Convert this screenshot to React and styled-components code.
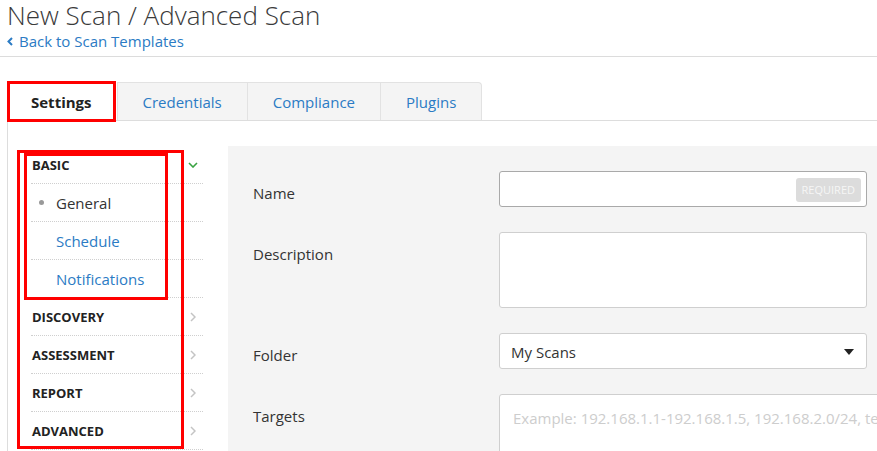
import React from 'react';
import styled, { createGlobalStyle, css } from 'styled-components';

const GlobalStyle = createGlobalStyle`
  html, body {
    margin: 0;
    padding: 0;
    background: #fff;
    overflow: hidden;
  }
  body {
    font-family: "Open Sans", "Noto Sans", sans-serif;
    color: #333;
  }
`;

const BLUE = '#2b7bc4';
const RED = '#ff0000';

const Page = styled.div`
  width: 877px;
  height: 451px;
  overflow: hidden;
`;

const Header = styled.header`
  padding: 0 7px;
  height: 56px;
  border-bottom: 1px solid #dcdcdc;
`;

const Title = styled.h1`
  margin: 0;
  font-size: 26px;
  font-weight: 300;
  line-height: 31px;
  color: #3a3a3a;
  white-space: nowrap;
`;

const BackLink = styled.a`
  display: flex;
  align-items: center;
  gap: 6px;
  font-size: 15px;
  line-height: 20px;
  color: ${BLUE};
  text-decoration: none;
`;

const Main = styled.div`
  margin-top: 25px;
  margin-left: 7px;
`;

const TabBar = styled.div`
  display: flex;
  height: 38px;
  border-bottom: 1px solid #ddd;
  padding-left: 1px;
`;

const Tab = styled.div`
  position: relative;
  display: flex;
  align-items: center;
  justify-content: center;
  padding: 0 25px;
  font-size: 15px;
  color: ${BLUE};
  background: #f4f4f4;
  border: 1px solid #e2e2e2;
  border-bottom: none;
  border-left-width: ${p => (p.$first ? 1 : 0)}px;
  ${p =>
    p.$last &&
    css`
      border-top-right-radius: 4px;
    `}
  ${p =>
    p.$active &&
    css`
      padding: 0 23px;
      background: #fff;
      color: #222;
      font-weight: 700;
      margin-right: 2px;
      margin-bottom: -1px;
      height: 39px;
      border: none;
      outline: 3px solid ${RED};
      outline-offset: -2px;
    `}
`;

const Body = styled.div`
  display: flex;
  align-items: flex-start;
  border-left: 1px solid #ddd;
  padding: 25px 0 0 23px;
  height: 320px;
`;

const Sidebar = styled.nav`
  position: relative;
  width: 172px;
  flex-shrink: 0;
  margin-right: 25px;
`;

const Row = styled.div`
  display: flex;
  align-items: center;
  justify-content: space-between;
  height: 37px;
  border-bottom: 1px dotted #cfcfcf;
  padding-left: ${p => (p.$sub ? 8 : 1)}px;
  padding-right: ${p => (p.$open ? 5 : 7)}px;
`;

const Section = styled.span`
  font-size: 13px;
  font-weight: 700;
  color: #222;
  text-transform: uppercase;
`;

const SubItem = styled.span`
  display: flex;
  align-items: center;
  font-size: 15px;
  color: ${p => (p.$current ? '#333' : BLUE)};
`;

const Bullet = styled.span`
  width: 5px;
  height: 5px;
  border-radius: 50%;
  background: ${p => (p.$show ? '#999' : 'transparent')};
  margin-right: 12px;
`;

const Annotation = styled.div`
  position: absolute;
  border: 3px solid ${RED};
  pointer-events: none;
`;

const Panel = styled.section`
  flex: 1;
  align-self: stretch;
  background: #f4f4f4;
  padding: 25px 0 0 25px;
  overflow: hidden;
`;

const Form = styled.div`
  display: grid;
  grid-template-columns: 246px auto;
  row-gap: 25px;
`;

const Label = styled.label`
  font-size: 15px;
  line-height: 20px;
  color: #333;
  padding-top: 12px;
`;

const Field = styled.div`
  position: relative;
  box-sizing: border-box;
  width: ${p => p.$width || 368}px;
  height: ${p => p.$height || 36}px;
  background: #fff;
  border: 1px solid ${p => (p.$dark ? '#a9a9a9' : '#cfcfcf')};
  border-radius: 3px;
  display: flex;
  align-items: ${p => (p.$top ? 'flex-start' : 'center')};
  justify-content: space-between;
  padding: ${p => (p.$top ? '13px 0 0 13px' : '1px 5px 0 11px')};
  font-size: 15px;
  color: #333;
  white-space: nowrap;
  overflow: hidden;
`;

const Placeholder = styled.span`
  color: #cdcdcd;
  font-size: 15px;
`;

const Badge = styled.span`
  background: #dcdcdc;
  color: #f6f6f6;
  font-size: 11px;
  border-radius: 3px;
  padding: 0 6px;
  height: 24px;
  line-height: 24px;
`;

const Caret = () => (
  <svg width="10" height="6" viewBox="0 0 10 6" style={{ marginRight: 7 }}>
    <path d="M0 0 H10 L5 6 Z" fill="#222" />
  </svg>
);

const Chevron = ({ open }) =>
  open ? (
    <svg width="10" height="6" viewBox="0 0 10 6">
      <path d="M1 1 L5 5 L9 1" fill="none" stroke="#3aa343" strokeWidth="1.6" />
    </svg>
  ) : (
    <svg width="6" height="10" viewBox="0 0 6 10">
      <path d="M1 1 L5 5 L1 9" fill="none" stroke="#c4c4c4" strokeWidth="1.5" />
    </svg>
  );

const BackIcon = () => (
  <svg width="6" height="9" viewBox="0 0 6 9">
    <path d="M5 1 L1.5 4.5 L5 8" fill="none" stroke={BLUE} strokeWidth="2" />
  </svg>
);

const tabs = ['Settings', 'Credentials', 'Compliance', 'Plugins'];
const subItems = ['General', 'Schedule', 'Notifications'];
const sections = ['Discovery', 'Assessment', 'Report', 'Advanced'];

export default function App() {
  return (
    <Page>
      <GlobalStyle />
      <Header>
        <Title>New Scan / Advanced Scan</Title>
        <BackLink href="#">
          <BackIcon />
          Back to Scan Templates
        </BackLink>
      </Header>
      <Main>
        <TabBar>
          {tabs.map((t, i) => (
            <Tab key={t} $active={i === 0} $first={i === 1} $last={i === tabs.length - 1}>
              {t}
            </Tab>
          ))}
        </TabBar>
        <Body>
          <Sidebar>
            <Row $open>
              <Section>Basic</Section>
              <Chevron open />
            </Row>
            {subItems.map((s, i) => (
              <Row key={s} $sub>
                <SubItem $current={i === 0}>
                  <Bullet $show={i === 0} />
                  {s}
                </SubItem>
              </Row>
            ))}
            {sections.map(s => (
              <Row key={s}>
                <Section>{s}</Section>
                <Chevron />
              </Row>
            ))}
            <Annotation style={{ left: -14, top: 4, width: 161, height: 293 }} />
            <Annotation style={{ left: -7, top: 7, width: 138, height: 141 }} />
          </Sidebar>
          <Panel>
            <Form>
              <Label>Name</Label>
              <Field $dark>
                <span />
                <Badge>REQUIRED</Badge>
              </Field>
              <Label>Description</Label>
              <Field $height={76} />
              <Label>Folder</Label>
              <Field>
                My Scans
                <Caret />
              </Field>
              <Label>Targets</Label>
              <Field $width={520} $height={80} $top>
                <Placeholder>Example: 192.168.1.1-192.168.1.5, 192.168.2.0/24, test.com</Placeholder>
              </Field>
            </Form>
          </Panel>
        </Body>
      </Main>
    </Page>
  );
}
